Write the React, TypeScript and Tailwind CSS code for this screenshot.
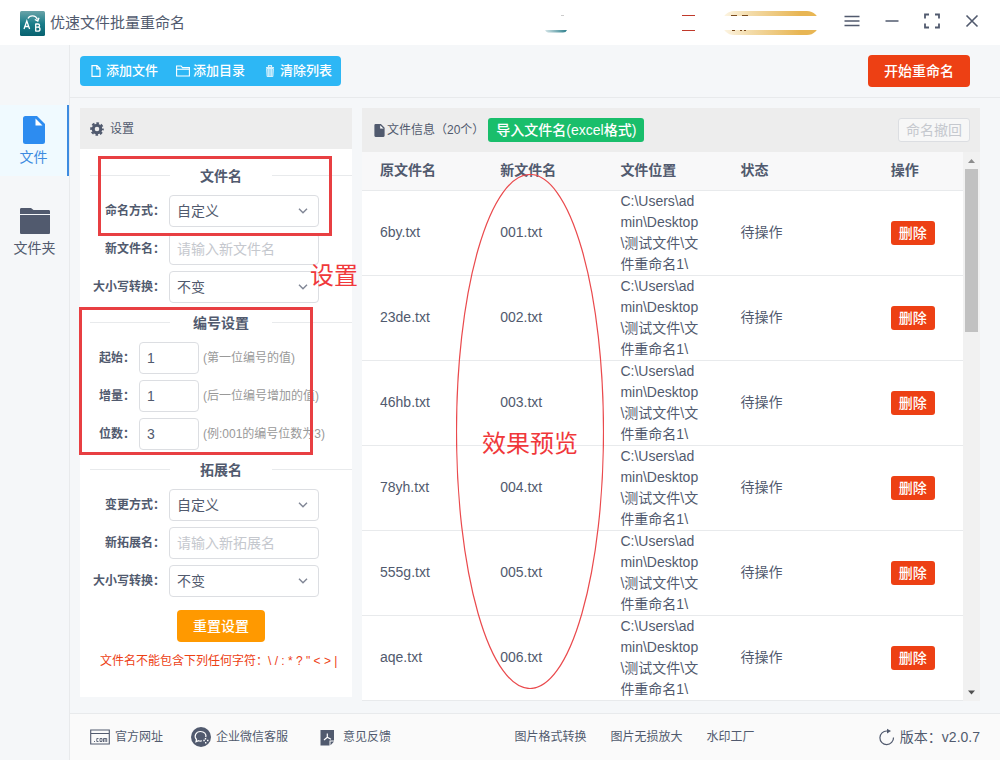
import { ReactNode, useState } from "react";

const FILES = [
  { name: "6by.txt", next: "001.txt" },
  { name: "23de.txt", next: "002.txt" },
  { name: "46hb.txt", next: "003.txt" },
  { name: "78yh.txt", next: "004.txt" },
  { name: "555g.txt", next: "005.txt" },
  { name: "aqe.txt", next: "006.txt" },
];

const FOLDER = "C:\\Users\\admin\\Desktop\\测试文件\\文件重命名1\\";

function Logo() {
  return (
    <svg viewBox="0 0 25 25" className="size-[25px]" aria-hidden="true">
      <defs>
        <linearGradient id="logo" x1="0" y1="0" x2="0" y2="1">
          <stop offset="0" stopColor="#6aa3a8" />
          <stop offset="0.5" stopColor="#1a7d8a" />
          <stop offset="1" stopColor="#07616f" />
        </linearGradient>
      </defs>
      <rect width="25" height="25" rx="1.5" fill="url(#logo)" />
      <g fill="none" stroke="#fff" strokeWidth="1.3">
        <path d="M8 7.500C9.500 4 15.500 3.500 17.500 8.500" />
        <path d="M14.800 8.500l3 1.500 1.200-3.200" />
        <path d="M4 18l2.800-8 2.800 8M5 15.500h3.800" />
        <path d="M15.700 12.500v8M15.700 13h2.200c2.200 0 2.200 3.200 0 3.200h-2.200M17.900 16.200c2.800 0 2.800 3.900 0 3.900h-2.200" />
      </g>
    </svg>
  );
}

function FileOutline() {
  return (
    <svg viewBox="0 0 14 14" className="size-3.5" fill="none" stroke="currentColor" strokeWidth="1.2" aria-hidden="true">
      <path d="M3 1.600h5l3 3v7.800H3zM7.800 1.800v3h3" />
    </svg>
  );
}

function FolderOutline() {
  return (
    <svg viewBox="0 0 14 14" className="size-3.5" fill="none" stroke="currentColor" strokeWidth="1.1" aria-hidden="true">
      <path d="M.6 12V2h4.600l1.300 1.600h6.900V12zM.6 5.300h12.800" />
    </svg>
  );
}

function Trash() {
  return (
    <svg viewBox="0 0 14 14" className="size-3.5 opacity-80" fill="none" stroke="currentColor" aria-hidden="true">
      <path d="M3 3.500h8M5.500 3V1.700h3V3" strokeWidth="1.200" />
      <path d="M3.600 4.500l.5 8h5.800l.5-8z" fill="currentColor" fillOpacity=".5" />
      <path d="M5.500 5v7M7 5v7M8.500 5v7" strokeWidth=".8" />
    </svg>
  );
}

function FileSolid({ className }: { className: string }) {
  return (
    <svg viewBox="0 0 22 28" className={className} aria-hidden="true">
      <path fill="currentColor" d="M2.500 0H12v9.500h10v16a2.500 2.500 0 0 1-2.500 2.500h-17A2.500 2.500 0 0 1 0 25.500v-23A2.500 2.500 0 0 1 2.500 0z" />
      <path fill="currentColor" d="M12 0h2l8 8v2H12z" />
      <path fill="#fff" d="M12.500 2.500v7h7z" />
    </svg>
  );
}

function FolderSolid() {
  return (
    <svg viewBox="0 0 30 26" className="h-[26px] w-[30px]" aria-hidden="true">
      <path fill="currentColor" d="M0 6V1.500C0 .5.500 0 1.500 0H11l2.500 2H28.500c1 0 1.500.5 1.500 1.500V6z" />
      <path fill="currentColor" d="M0 7h30v17.500c0 1-.5 1.500-1.500 1.500h-27C.5 26 0 25.500 0 24.500z" />
    </svg>
  );
}

function Gear() {
  return (
    <svg viewBox="0 0 14 14" className="size-3.5" aria-hidden="true">
      <circle cx="7" cy="7" r="3.800" fill="none" stroke="currentColor" strokeWidth="3" />
      <circle cx="7" cy="7" r="5.800" fill="none" stroke="currentColor" strokeWidth="2" strokeDasharray="2.600 1.955" strokeDashoffset="1.300" />
    </svg>
  );
}

function Divider({ children }: { children: ReactNode }) {
  return (
    <div className="ml-2.5 flex h-[25px] items-center justify-between text-sm font-bold">
      <span className="h-px w-20 bg-[#e8eaec]" />
      <h3>{children}</h3>
      <span className="h-px w-20 bg-[#e8eaec]" />
    </div>
  );
}

function SelectRow({ id, label, options }: { id: string; label: string; options: string[] }) {
  return (
    <div className="flex items-center gap-1">
      <label htmlFor={id} className="w-[85px] text-right text-xs font-bold">
        {label}
      </label>
      <div className="relative">
        <select
          id={id}
          className="h-8 w-[150px] appearance-none rounded border border-[#dcdee2] bg-white px-[7px] text-sm outline-none"
        >
          {options.map((o) => (
            <option key={o}>{o}</option>
          ))}
        </select>
        <svg
          viewBox="0 0 10 6"
          className="pointer-events-none absolute top-[13px] right-[11px] h-1.5 w-2.5"
          fill="none"
          stroke="#808695"
          strokeWidth="1.400"
          aria-hidden="true"
        >
          <path d="M1 .8l4 4 4-4" />
        </svg>
      </div>
    </div>
  );
}

function InputRow({ id, label, placeholder }: { id: string; label: string; placeholder: string }) {
  return (
    <div className="flex items-center gap-1">
      <label htmlFor={id} className="w-[85px] text-right text-xs font-bold">
        {label}
      </label>
      <input
        id={id}
        placeholder={placeholder}
        className="h-8 w-[150px] rounded border border-[#dcdee2] bg-white px-[7px] text-sm outline-none placeholder:text-[#c5c8ce]"
      />
    </div>
  );
}

function NumberRow({ id, label, value, hint }: { id: string; label: string; value: string; hint: string }) {
  const [text, setText] = useState(value);
  return (
    <div className="flex items-center gap-1">
      <label htmlFor={id} className="w-[55px] text-right text-xs font-bold">
        {label}
      </label>
      <input
        id={id}
        value={text}
        onChange={(e) => setText(e.target.value)}
        className="h-8 w-[60px] rounded border border-[#dcdee2] bg-white px-[7px] text-sm outline-none"
      />
      <span className="text-xs whitespace-nowrap text-[#999]">{hint}</span>
    </div>
  );
}

function Header() {
  return (
    <header className="flex h-[45px] items-center justify-between bg-white px-5">
      <div className="flex items-center gap-[5px] pt-0.5">
        <Logo />
        <h1 className="text-[15px]">优速文件批量重命名</h1>
      </div>
      <div className="flex items-center">
        <svg viewBox="0 0 276 26" className="mr-[25px] h-[26px] w-[276px]" aria-hidden="true">
          <defs>
            <linearGradient id="gold">
              <stop offset="0" stopColor="#fdf6e6" />
              <stop offset="0.3" stopColor="#f3dba8" />
              <stop offset="0.8" stopColor="#e8b654" />
              <stop offset="1" stopColor="#e8b654" />
            </linearGradient>
            <linearGradient id="teal">
              <stop offset="0" stopColor="#d5e5e8" />
              <stop offset="1" stopColor="#2c7f8c" />
            </linearGradient>
          </defs>
          <path d="M2 20h22q-1 2.500-4 2.500H5Q3 22 2 20z" fill="url(#teal)" />
          <path d="M18 5.500h3" stroke="#ccc" />
          <path d="M139 5.500h13M139 20.500h13" stroke="#c0392b" />
          <rect x="179" y="1" width="97" height="24" rx="12" fill="url(#gold)" />
          <path d="M188 5.500h6M199 5.500h6M189 20.500h3M197 20.500h2M201 20.500h2" stroke="#7a4a1c" />
          <path d="M177 6h99v14h-99z" fill="#fff" />
        </svg>
        <div className="flex items-center gap-6 pb-1">
          <button type="button" aria-label="菜单">
            <svg viewBox="0 0 16 16" className="size-4" stroke="currentColor" strokeWidth="1.500">
              <path d="M.5 3.500h15M.5 8h15M.5 12.500h15" />
            </svg>
          </button>
          <button type="button" aria-label="最小化">
            <svg viewBox="0 0 16 16" className="size-4" stroke="currentColor" strokeWidth="1.500">
              <path d="M1.500 8h13" />
            </svg>
          </button>
          <button type="button" aria-label="最大化">
            <svg viewBox="0 0 16 16" className="size-4" fill="none" stroke="currentColor" strokeWidth="1.800">
              <path d="M1 5.500V1.500h4M11 1.500h4v4M15 10.500v4h-4M5 14.500H1v-4" />
            </svg>
          </button>
          <button type="button" aria-label="关闭">
            <svg viewBox="0 0 16 16" className="size-4" stroke="currentColor" strokeWidth="1.600">
              <path d="M2.500 2.500l11 11M13.500 2.500l-11 11" />
            </svg>
          </button>
        </div>
      </div>
    </header>
  );
}

function Sidebar() {
  return (
    <nav className="w-[70px] shrink-0 border-r border-[#e8eaec] pt-[60px] text-sm">
      <a
        href="#file"
        className="flex h-[71px] flex-col items-center gap-[3px] border-r-2 border-[#3d8be0] bg-[#f0faff] pt-[11px] text-[#3d8be0]"
      >
        <FileSolid className="h-7 w-[22px] text-[#2d8cf0]" />
        文件
      </a>
      <a href="#folder" className="mt-5 flex h-[71px] flex-col items-center gap-1 pt-3">
        <FolderSolid />
        文件夹
      </a>
    </nav>
  );
}

function Toolbar() {
  const items = [
    { label: "添加文件", icon: <FileOutline /> },
    { label: "添加目录", icon: <FolderOutline /> },
    { label: "清除列表", icon: <Trash /> },
  ];
  return (
    <div className="flex h-[53px] items-center justify-between border-b border-[#e8eaec] pr-[30px] pl-2.5">
      <div className="flex h-[30px] overflow-hidden rounded bg-[#2db7f5] text-[13px] font-medium text-white">
        {items.map((item) => (
          <button key={item.label} type="button" className="flex items-center gap-[3px] px-[9px]">
            {item.icon}
            {item.label}
          </button>
        ))}
      </div>
      <button type="button" className="h-8 rounded bg-[#ed4014] px-4 text-sm font-medium text-white">
        开始重命名
      </button>
    </div>
  );
}

function Settings() {
  return (
    <section className="relative w-[272px] shrink-0 self-start bg-white pb-7">
      <div className="flex h-[41px] items-center gap-1.5 bg-[#ededed] px-2.5 text-xs">
        <Gear />
        <h2>设置</h2>
      </div>
      <form className="flex flex-col gap-[7px] pt-3.5">
        <Divider>文件名</Divider>
        <div className="flex flex-col gap-1.5">
          <SelectRow id="mode" label="命名方式：" options={["自定义"]} />
          <InputRow id="name" label="新文件名：" placeholder="请输入新文件名" />
          <SelectRow id="case" label="大小写转换：" options={["不变", "大写", "小写"]} />
        </div>
        <Divider>编号设置</Divider>
        <div className="flex flex-col gap-1.5">
          <NumberRow id="start" label="起始：" value="1" hint="(第一位编号的值)" />
          <NumberRow id="step" label="增量：" value="1" hint="(后一位编号增加的值)" />
          <NumberRow id="digits" label="位数：" value="3" hint="(例:001的编号位数为3)" />
        </div>
        <Divider>拓展名</Divider>
        <div className="flex flex-col gap-1.5">
          <SelectRow id="ext-mode" label="变更方式：" options={["自定义"]} />
          <InputRow id="ext" label="新拓展名：" placeholder="请输入新拓展名" />
          <SelectRow id="ext-case" label="大小写转换：" options={["不变", "大写", "小写"]} />
        </div>
        <button
          type="reset"
          className="mt-1.5 ml-2.5 h-8 self-center rounded bg-[#ff9900] px-4 text-sm font-medium text-white"
        >
          重置设置
        </button>
        <p className="mt-1 ml-5 text-xs whitespace-nowrap text-[#ed4014]">
          文件名不能包含下列任何字符：\ / : * ? " &lt; &gt; |
        </p>
      </form>

      <div className="pointer-events-none absolute top-12 left-[18px] h-20 w-[234px] border-3 border-[#e83f42]" />
      <div className="pointer-events-none absolute top-[199px] -left-px h-[148px] w-[234px] border-3 border-[#e83f42]" />
      <span className="pointer-events-none absolute top-[150px] left-[230px] z-10 text-2xl leading-9 whitespace-nowrap text-[#f0383b]">
        设置
      </span>
    </section>
  );
}

function FileTable() {
  return (
    <section className="relative min-w-0 flex-1">
      <div className="flex h-11 items-center bg-[#ededed] pr-2.5 pl-3 text-xs">
        <FileSolid className="mr-0.5 h-[13px] w-[11px]" />
        <h2>文件信息（20个）</h2>
        <button type="button" className="ml-1 h-6 rounded-[3px] bg-[#19be6b] px-2 text-sm font-medium text-white">
          导入文件名(excel格式)
        </button>
        <button
          type="button"
          disabled
          className="ml-auto h-6 rounded-[3px] border border-[#dcdee2] bg-[#f7f7f7] px-[7px] text-sm text-[#c5c8ce]"
        >
          命名撤回
        </button>
      </div>
      <div className="flex">
        <table className="w-full flex-1 table-fixed bg-white text-left text-sm leading-[21px]">
          <colgroup>
            <col className="w-[20%]" />
            <col className="w-[20%]" />
            <col className="w-[20%]" />
            <col className="w-[25%]" />
            <col className="w-[15%]" />
          </colgroup>
          <thead>
            <tr className="h-[38px] border-b border-[#e8eaec] bg-[#f8f8f9]">
              <th className="px-[18px]">原文件名</th>
              <th className="px-[18px]">新文件名</th>
              <th className="px-[18px]">文件位置</th>
              <th className="px-[18px]">状态</th>
              <th className="px-[18px]">操作</th>
            </tr>
          </thead>
          <tbody>
            {FILES.map((file) => (
              <tr key={file.name} className="h-[85px] border-b border-[#e8eaec]">
                <td className="px-[18px]">{file.name}</td>
                <td className="px-[18px]">{file.next}</td>
                <td className="pr-6 pl-[18px] break-all">{FOLDER}</td>
                <td className="px-[18px]">待操作</td>
                <td className="px-[18px]">
                  <button
                    type="button"
                    className="h-6 rounded-[3px] bg-[#ed4014] px-2 text-sm leading-6 font-medium whitespace-nowrap text-white"
                  >
                    删除
                  </button>
                </td>
              </tr>
            ))}
          </tbody>
        </table>
        <div className="flex w-[17px] shrink-0 flex-col items-center justify-between bg-[#f1f1f1]" aria-hidden="true">
          <svg viewBox="0 0 17 17" className="size-[17px]">
            <path d="M5 11l3.500-4 3.500 4z" fill="#8c8c8c" />
          </svg>
          <span className="mb-auto h-[163px] w-[13px] bg-[#c1c1c1]" />
          <svg viewBox="0 0 17 17" className="size-[17px]">
            <path d="M5 6.500h7l-3.500 4z" fill="#505050" />
          </svg>
        </div>
      </div>

      <div className="pointer-events-none absolute top-[66px] left-[94px] flex h-[515px] w-[148px] items-center justify-center">
        <svg viewBox="0 0 148 515" className="absolute inset-0 size-full" fill="none" aria-hidden="true">
          <ellipse cx="74" cy="257.500" rx="73.500" ry="257" stroke="#ea4a4d" strokeWidth="1.200" />
        </svg>
        <span className="pt-6 text-2xl whitespace-nowrap text-[#f0383b]">效果预览</span>
      </div>
    </section>
  );
}

function Footer() {
  return (
    <footer className="flex h-[47px] items-center justify-between border-t border-[#e8eaec] bg-[#fafafa] px-5 text-xs">
      <div className="flex items-center gap-7">
        <a href="#site" className="flex items-center gap-[5px]">
          <svg viewBox="0 0 20 16" className="h-4 w-5" fill="none" stroke="currentColor" aria-hidden="true">
            <path d="M.7 1h18.600v14H.7zM.7 4.500h18.600" strokeWidth="1.100" />
            <path d="M4 12.500h1M8.500 9.500H6.800v3h1.700M10 9.500h2v3h-2zM13.500 13V9.500h3.200V13M15.100 9.500V13" strokeWidth=".9" />
          </svg>
          官方网址
        </a>
        <a href="#service" className="flex items-center gap-[5px]">
          <svg viewBox="0 0 20 20" className="size-5" aria-hidden="true">
            <circle cx="10" cy="10" r="10" fill="currentColor" />
            <g fill="none" stroke="#fff">
              <path d="M11 13.800c-1 .3-2.500.3-3.500-.1L5 14.800l.5-2.300C2.500 9 5 4.500 9.500 4.500c3.800 0 6 2.700 5.300 5.700" strokeWidth="1.200" />
              <path d="M14.500 11v1.500M12.300 13.500h1.500M16 13.500h1.500M14.700 15v1.500" strokeWidth="1.400" />
            </g>
          </svg>
          企业微信客服
        </a>
        <a href="#feedback" className="ml-1 flex items-center gap-2">
          <svg viewBox="0 0 15 17" className="h-[17px] w-[15px]" aria-hidden="true">
            <path d="M.5 1H14v10.500H9.500v5h-9z" fill="currentColor" />
            <path d="M10.500 12.500H14l-3.500 3.800z" fill="currentColor" />
            <path d="M7.300 4.500v3.800M7.300 8.300L4 11M7.300 8.300l3.700 1.900" fill="none" stroke="#fff" strokeWidth="1.200" />
          </svg>
          意见反馈
        </a>
      </div>
      <div className="flex items-center gap-6">
        <a href="#convert">图片格式转换</a>
        <a href="#enlarge">图片无损放大</a>
        <a href="#watermark">水印工厂</a>
      </div>
      <button type="button" className="flex items-center gap-1 text-sm">
        <svg viewBox="0 0 18 18" className="size-[18px]" fill="none" stroke="currentColor" aria-hidden="true">
          <path d="M15.500 9.500A6.800 6.800 0 1 1 9 3h2" strokeWidth="1.200" />
          <path d="M9 .8l4 2.300L9 5.400z" fill="currentColor" stroke="none" />
        </svg>
        版本：v2.0.7
      </button>
    </footer>
  );
}

export default function App() {
  return (
    <div className="flex min-h-screen flex-col bg-[#f5f7f9] font-['Liberation_Sans','Noto_Sans_CJK_SC',sans-serif] text-[#515a6e]">
      <Header />
      <div className="flex flex-1">
        <Sidebar />
        <div className="flex min-w-0 flex-1 flex-col">
          <Toolbar />
          <main className="flex flex-1 gap-2.5 pt-2.5 pr-5 pb-3 pl-2.5">
            <Settings />
            <FileTable />
          </main>
          <Footer />
        </div>
      </div>
    </div>
  );
}
